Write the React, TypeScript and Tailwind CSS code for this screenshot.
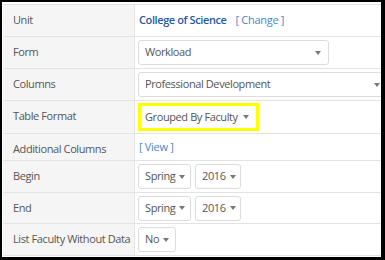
const font = { fontFamily: '"Open Sans", "Liberation Sans", sans-serif' };

function Caret() {
    return <span className="ml-auto inline-block h-0 w-0 shrink-0 border-x-[3.5px] border-t-[4px] border-x-transparent border-t-[#777]" />;
}

function Select({ label, className }: { label: string; className: string }) {
    return (
        <div className={`flex h-[25px] items-center gap-[4px] whitespace-nowrap rounded-[3px] border border-[#dcdcdc] bg-white pl-[6px] pr-[7px] text-[11px] tracking-[-0.4px] text-[#555] ${className}`}>
            <span>{label}</span>
            <Caret />
        </div>
    );
}

function Row({ label, h, children }: { label: string; h: string; children: React.ReactNode }) {
    return (
        <div className={`flex border-b border-[#e3e3e3] ${h}`}>
            <div className="w-[132px] shrink-0 whitespace-nowrap border-r border-[#e3e3e3] bg-[#f5f5f5] pl-[10px] pt-[7px] text-[11px] tracking-[-0.4px] text-[#555]">
                {label}
            </div>
            <div className="flex min-w-0 flex-1 items-center gap-[4px] pl-[3px]">{children}</div>
        </div>
    );
}

export default function App() {
    return (
        <div className="h-[260px] w-[385px] overflow-hidden bg-black pb-[3px] pl-[2px] pr-[4px] pt-[2px]" style={font}>
            <div className="h-full overflow-hidden bg-white pl-[1px] pt-[2px]">
                <div className="border-t border-[#e3e3e3]">
                    <Row label="Unit" h="h-[32px]">
                        <span className="ml-[1px] whitespace-nowrap text-[11px] font-semibold tracking-[-0.4px] text-[#1f5aa6]">College of Science</span>
                        <span className="ml-[5px] whitespace-nowrap text-[11px] tracking-[-0.3px] text-[#4a86c8]">[ Change ]</span>
                    </Row>
                    <Row label="Form" h="h-[32px]">
                        <Select label="Workload" className="w-[191px]" />
                    </Row>
                    <Row label="Columns" h="h-[32px]">
                        <Select label="Professional Development" className="w-[250px] shrink-0" />
                    </Row>
                    <Row label="Table Format" h="h-[33px]">
                        <div className="flex h-[28px] w-[121px] items-center whitespace-nowrap border-[3px] border-[#ffff00] pl-[4px] pr-[7px] text-[11px] tracking-[-0.4px] text-[#555]">
                            <span>Grouped By Faculty</span>
                            <Caret />
                        </div>
                    </Row>
                    <Row label="Additional Columns" h="h-[27px]">
                        <span className="ml-[1px] text-[11px] tracking-[-0.3px] text-[#4a86c8]">[ View ]</span>
                    </Row>
                    <Row label="Begin" h="h-[32px]">
                        <Select label="Spring" className="w-[53px]" />
                        <Select label="2016" className="w-[46px]" />
                    </Row>
                    <Row label="End" h="h-[31px]">
                        <Select label="Spring" className="w-[53px]" />
                        <Select label="2016" className="w-[46px]" />
                    </Row>
                    <Row label="List Faculty Without Data" h="h-[32px]">
                        <Select label="No" className="w-[38px]" />
                    </Row>
                </div>
            </div>
        </div>
    );
}
